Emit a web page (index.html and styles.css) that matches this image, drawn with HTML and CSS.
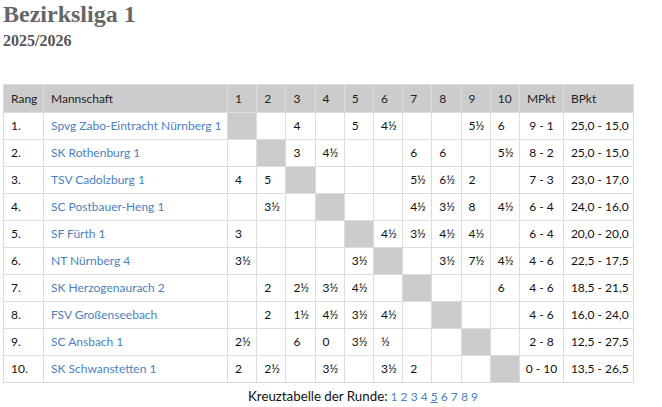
FILE: index.html
```html
<!DOCTYPE html>
<html lang="de">
<head>
<meta charset="utf-8">
<title>Bezirksliga 1</title>
<link rel="stylesheet" href="styles.css">
</head>
<body>
<h1 class="title">Bezirksliga 1</h1>
<h2 class="season">2025/2026</h2>
<table class="cross">
<colgroup>
<col class="c-rang"><col class="c-team">
<col class="c-r"><col class="c-r"><col class="c-r"><col class="c-r"><col class="c-r">
<col class="c-r"><col class="c-r"><col class="c-r"><col class="c-r"><col class="c-r">
<col class="c-mp"><col class="c-bp">
</colgroup>
<thead>
<tr><th>Rang</th><th>Mannschaft</th><th>1</th><th>2</th><th>3</th><th>4</th><th>5</th><th>6</th><th>7</th><th>8</th><th>9</th><th>10</th><th>MPkt</th><th>BPkt</th></tr>
</thead>
<tbody>
<tr><td>1.</td><td><a href="#">Spvg Zabo-Eintracht Nürnberg 1</a></td><td class="x"></td><td></td><td>4</td><td></td><td>5</td><td>4½</td><td></td><td></td><td>5½</td><td>6</td><td class="mp">9 - 1</td><td>25,0 - 15,0</td></tr>
<tr><td>2.</td><td><a href="#">SK Rothenburg 1</a></td><td></td><td class="x"></td><td>3</td><td>4½</td><td></td><td></td><td>6</td><td>6</td><td></td><td>5½</td><td class="mp">8 - 2</td><td>25,0 - 15,0</td></tr>
<tr><td>3.</td><td><a href="#">TSV Cadolzburg 1</a></td><td>4</td><td>5</td><td class="x"></td><td></td><td></td><td></td><td>5½</td><td>6½</td><td>2</td><td></td><td class="mp">7 - 3</td><td>23,0 - 17,0</td></tr>
<tr><td>4.</td><td><a href="#">SC Postbauer-Heng 1</a></td><td></td><td>3½</td><td></td><td class="x"></td><td></td><td></td><td>4½</td><td>3½</td><td>8</td><td>4½</td><td class="mp">6 - 4</td><td>24,0 - 16,0</td></tr>
<tr><td>5.</td><td><a href="#">SF Fürth 1</a></td><td>3</td><td></td><td></td><td></td><td class="x"></td><td>4½</td><td>3½</td><td>4½</td><td>4½</td><td></td><td class="mp">6 - 4</td><td>20,0 - 20,0</td></tr>
<tr><td>6.</td><td><a href="#">NT Nürnberg 4</a></td><td>3½</td><td></td><td></td><td></td><td>3½</td><td class="x"></td><td></td><td>3½</td><td>7½</td><td>4½</td><td class="mp">4 - 6</td><td>22,5 - 17,5</td></tr>
<tr><td>7.</td><td><a href="#">SK Herzogenaurach 2</a></td><td></td><td>2</td><td>2½</td><td>3½</td><td>4½</td><td></td><td class="x"></td><td></td><td></td><td>6</td><td class="mp">4 - 6</td><td>18,5 - 21,5</td></tr>
<tr><td>8.</td><td><a href="#">FSV Großenseebach</a></td><td></td><td>2</td><td>1½</td><td>4½</td><td>3½</td><td>4½</td><td></td><td class="x"></td><td></td><td></td><td class="mp">4 - 6</td><td>16,0 - 24,0</td></tr>
<tr><td>9.</td><td><a href="#">SC Ansbach 1</a></td><td>2½</td><td></td><td>6</td><td>0</td><td>3½</td><td>½</td><td></td><td></td><td class="x"></td><td></td><td class="mp">2 - 8</td><td>12,5 - 27,5</td></tr>
<tr><td>10.</td><td><a href="#">SK Schwanstetten 1</a></td><td>2</td><td>2½</td><td></td><td>3½</td><td></td><td>3½</td><td>2</td><td></td><td></td><td class="x"></td><td class="mp">0 - 10</td><td>13,5 - 26,5</td></tr>
</tbody>
</table>
<p class="rounds"><span class="label">Kreuztabelle der Runde:</span> <a href="#">1</a> <a href="#">2</a> <a href="#">3</a> <a href="#">4</a> <a href="#" class="current">5</a> <a href="#">6</a> <a href="#">7</a> <a href="#">8</a> <a href="#">9</a></p>
</body>
</html>
```

FILE: styles.css
```css
body {
  margin: 0;
  padding: 0 3px;
  background: #fff;
  color: #222;
  font-family: "Liberation Serif", serif;
}
.title {
  margin: 0;
  font-size: 24px;
  line-height: 28px;
  font-weight: bold;
  color: #666;
}
.season {
  margin: 3px 0 0;
  font-size: 16px;
  line-height: 20px;
  font-weight: bold;
  color: #555;
}
.cross {
  margin-top: 33px;
  border-collapse: collapse;
  table-layout: fixed;
  width: 631px;
  font-family: Lato, sans-serif;
  font-size: 12px;
  color: #111;
}
.c-rang { width: 40px; }
.c-team { width: 184px; }
.c-r { width: 29.2px; }
.c-mp { width: 44px; }
.c-bp { width: 70px; }
.cross th,
.cross td {
  border: 1px solid #dcdcdc;
  padding: 6px 6px 6px 7px;
  line-height: 14px;
  text-align: left;
  white-space: nowrap;
  overflow: hidden;
}
.cross th {
  background: #cccccc;
  font-weight: normal;
  color: #1e1e1e;
  line-height: 15px;
}
.cross td.x { background: #cccccc; }
.cross td.mp { text-align: center; padding-left: 4px; padding-right: 4px; }
.cross a { color: #4a7fc0; text-decoration: none; }
.rounds {
  margin: 6px 0 0;
  padding-left: 245px;
  font-family: Lato, sans-serif;
  font-size: 12px;
  line-height: 15px;
  color: #111;
}
.rounds .label { font-size: 13.3px; }
.rounds a { color: #4a7fc0; text-decoration: none; }
.rounds a.current { text-decoration: underline; }
```
